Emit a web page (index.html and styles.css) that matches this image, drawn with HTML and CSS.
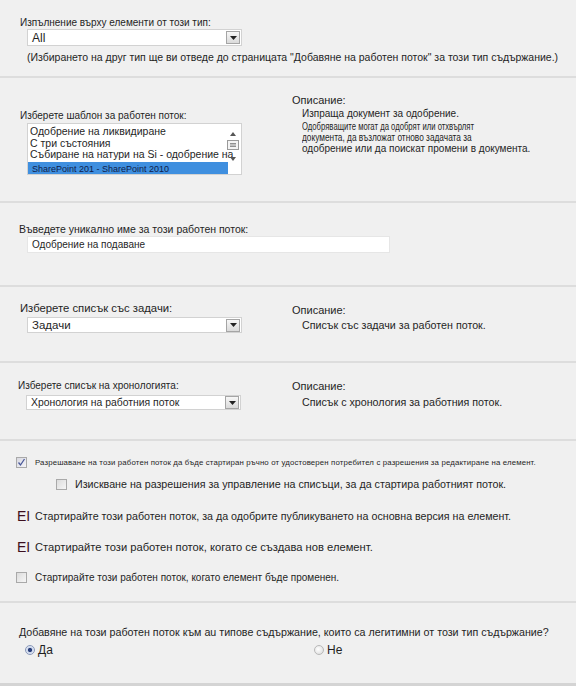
FILE: index.html
```html
<!DOCTYPE html>
<html lang="bg">
<head>
<meta charset="utf-8">
<title>Workflow settings</title>
<link rel="stylesheet" href="styles.css">
</head>
<body>
<div class="sec s1">
  <div class="lbl">Изпълнение върху елементи от този тип:</div>
  <div class="select sel-a"><span>All</span><span class="dd"><svg width="7" height="4" viewBox="0 0 7 4"><path d="M0 0h7L3.5 4z" fill="#222"/></svg></span></div>
  <div class="note">(Избирането на друг тип ще ви отведе до страницата "Добавяне на работен поток" за този тип съдържание.)</div>
</div>

<div class="sec s2 row">
  <div class="left">
    <div class="lbl">Изберете шаблон за работен поток:</div>
    <div class="listbox">
      <div class="opt">Одобрение на ликвидиране</div>
      <div class="opt">С три състояния</div>
      <div class="opt">Събиране на натури на Si - одобрение на</div>
      <div class="opt selected">SharePoint 201 - SharePoint 2010</div>
      <div class="scroll">
        <svg class="up" width="6" height="4" viewBox="0 0 6 4"><path d="M0 4L3 0L6 4z" fill="#555"/></svg>
        <svg class="thumb" width="12" height="10" viewBox="0 0 12 10"><rect x="0.5" y="0.5" width="11" height="9" fill="#f4f4f4" stroke="#9a9a9a"/><path d="M3 3.5h6M3 5h6M3 6.5h6" stroke="#777" stroke-width="0.8"/></svg>
        <svg class="down" width="6" height="4" viewBox="0 0 6 4"><path d="M0 0L3 4L6 0z" fill="#555"/></svg>
      </div>
    </div>
  </div>
  <div class="right r2">
    <div class="dlbl">Описание:</div>
    <div class="desc d-a">Изпраща документ за одобрение.</div>
    <div class="desc w-b"><span class="d-b">Одобряващите могат да одобрят или отхвърлят</span></div>
    <div class="desc w-c"><span class="d-c">документа, да възложат отново задачата за</span></div>
    <div class="desc d-d">одобрение или да поискат промени в документа.</div>
  </div>
</div>

<div class="sec s3">
  <div class="lbl lbl-name">Въведете уникално име за този работен поток:</div>
  <div class="input">Одобрение на подаване</div>
</div>

<div class="sec s4 row">
  <div class="left l4">
    <div class="lbl big">Изберете списък със задачи:</div>
    <div class="select sel-b"><span>Задачи</span><span class="dd"><svg width="7" height="4" viewBox="0 0 7 4"><path d="M0 0h7L3.5 4z" fill="#222"/></svg></span></div>
  </div>
  <div class="right r4">
    <div class="dlbl">Описание:</div>
    <div class="desc d-big">Списък със задачи за работен поток.</div>
  </div>
</div>

<div class="sec s5 row">
  <div class="left l5">
    <div class="lbl">Изберете списък на хронологията:</div>
    <div class="select sel-c"><span>Хронология на работния поток</span><span class="dd"><svg width="7" height="4" viewBox="0 0 7 4"><path d="M0 0h7L3.5 4z" fill="#222"/></svg></span></div>
  </div>
  <div class="right r5">
    <div class="dlbl">Описание:</div>
    <div class="desc d-big">Списък с хронология за работния поток.</div>
  </div>
</div>

<div class="sec s6">
  <div class="crow c1"><span class="cb checked"><svg width="9" height="9" viewBox="0 0 9 9"><path d="M1.5 4.5L3.5 7L7.5 1" fill="none" stroke="#4b5a9a" stroke-width="1.3"/></svg></span><span class="tiny">Разрешаване на този работен поток да бъде стартиран ръчно от удостоверен потребител с разрешения за редактиране на елемент.</span></div>
  <div class="crow c2"><span class="cb"></span><span class="mid">Изискване на разрешения за управление на списъци, за да стартира работният поток.</span></div>
  <div class="crow c3"><span class="ei">EI</span><span class="mid">Стартирайте този работен поток, за да одобрите публикуването на основна версия на елемент.</span></div>
  <div class="crow c4"><span class="ei">EI</span><span class="mid lg">Стартирайте този работен поток, когато се създава нов елемент.</span></div>
  <div class="crow c5"><span class="cb"></span><span class="sm">Стартирайте този работен поток, когато елемент бъде променен.</span></div>
</div>

<div class="sec s7">
  <div class="q">Добавяне на този работен поток към au типове съдържание, които са легитимни от този тип съдържание?</div>
  <div class="radios">
    <span class="ropt yes"><span class="radio on"></span>Да</span>
    <span class="ropt no"><span class="radio"></span>Не</span>
  </div>
</div>
</body>
</html>
```

FILE: styles.css
```css
html, body {
  margin: 0;
  padding: 0;
}
body {
  background: #f0f0f0;
  font-family: "Liberation Sans", Arial, sans-serif;
  color: #1f1f1f;
  width: 576px;
  height: 686px;
  overflow: hidden;
}
.sec {
  box-sizing: border-box;
  border-bottom: 2px solid #dddddd;
  padding-left: 20px;
}
.row {
  display: flex;
}
.left {
  width: 272px;
  flex: none;
}
.lbl {
  font-size: 10px;
  line-height: 12px;
  white-space: nowrap;
}
.lbl.big {
  font-size: 11.3px;
  line-height: 13px;
}
.select {
  margin-left: 7px;
  width: 215px;
  box-sizing: border-box;
  background: #fff;
  border: 1px solid #d2d2d2;
  display: flex;
  align-items: center;
  justify-content: space-between;
  padding-left: 4px;
  font-size: 11px;
  white-space: nowrap;
}
.dd {
  width: 14px;
  height: 13px;
  box-sizing: border-box;
  border: 1px solid #a5a5a5;
  background: linear-gradient(#f7f7f7, #dadada);
  margin-right: 1px;
  display: flex;
  align-items: center;
  justify-content: center;
}
.dd svg { display: block; }

/* section 1 */
.s1 {
  height: 78px;
  padding-top: 17px;
}
.sel-a {
  height: 17px;
  font-size: 12px;
}
.note {
  margin: 5px 0 0 7px;
  font-size: 10.5px;
  line-height: 12px;
  white-space: nowrap;
}

/* section 2 */
.s2 {
  height: 125px;
}
.s2 .left {
  padding-top: 32px;
}
.listbox {
  position: relative;
  margin: 1px 0 0 7px;
  width: 215px;
  height: 52px;
  box-sizing: border-box;
  background: #fff;
  border: 1px solid #d2d2d2;
  padding-top: 2px;
  overflow: hidden;
}
.opt {
  font-size: 10.5px;
  line-height: 11.5px;
  padding-left: 2px;
  white-space: nowrap;
}
.opt.selected {
  background: #3f8fdf;
  font-size: 9px;
  line-height: 14px;
  margin-top: 1px;
  width: 196px;
  padding-left: 4px;
  color: #10204a;
}
.scroll {
  position: absolute;
  right: 0;
  top: 0;
  bottom: 0;
  width: 16px;
  display: flex;
  flex-direction: column;
  align-items: center;
}
.scroll .up { margin-top: 8px; }
.scroll .thumb { margin-top: 4px; }
.scroll .down { margin-top: 7px; }

.right .dlbl {
  font-size: 11px;
  line-height: 12px;
}
.desc {
  margin-left: 10px;
  white-space: nowrap;
}
.r2 {
  padding-top: 16px;
}
.d-a { font-size: 10px; line-height: 12px; margin-top: 2px; }
.w-b {
  font-size: 10px;
  line-height: 12px;
  height: 12px;
  margin-top: 1px;
}
.d-b {
  display: inline-block;
  vertical-align: top;
  line-height: 12px;
  transform: scaleX(0.77);
  transform-origin: left center;
}
.w-c {
  font-size: 10px;
  line-height: 10px;
  height: 10px;
}
.d-c {
  display: inline-block;
  vertical-align: top;
  line-height: 10px;
  transform: scaleX(0.83);
  transform-origin: left center;
}
.d-d { font-size: 10px; line-height: 12px; }

/* section 3 */
.s3 {
  height: 84px;
  padding-top: 20px;
  padding-left: 19px;
}
.lbl-name {
  font-size: 10.5px;
}
.input {
  margin: 1px 0 0 8px;
  width: 363px;
  height: 17px;
  box-sizing: border-box;
  background: #fff;
  border: 1px solid #e6e6e6;
  padding-left: 4px;
  font-size: 10px;
  line-height: 15px;
}

/* section 4 */
.s4 {
  height: 76px;
}
.l4 {
  padding-top: 15px;
}
.sel-b {
  margin-top: 2px;
  height: 16px;
  font-size: 11.5px;
}
.r4 {
  padding-top: 17px;
}
.d-big {
  font-size: 10.7px;
  line-height: 12px;
  margin-top: 3px;
}

/* section 5 */
.s5 {
  height: 78px;
  padding-left: 18px;
}
.l5 {
  width: 274px;
  padding-top: 17px;
}
.sel-c {
  margin-left: 8px;
  margin-top: 3px;
  height: 15px;
  font-size: 10.4px;
}
.r5 {
  padding-top: 17px;
}
.r5 .d-big {
  margin-top: 4px;
}

/* section 6 */
.s6 {
  height: 162px;
  padding-left: 16px;
  padding-top: 15px;
}
.crow {
  display: flex;
  align-items: center;
  white-space: nowrap;
}
.cb {
  flex: none;
  width: 11px;
  height: 11px;
  box-sizing: border-box;
  border: 1px solid #a9a9a9;
  background: linear-gradient(135deg, #dcdcdc, #f6f6f6);
  margin-right: 8px;
  display: flex;
  align-items: center;
  justify-content: center;
}
.cb.checked {
  background: linear-gradient(135deg, #d8d8e0, #f4f4f8);
}
.cb svg { display: block; }
.tiny {
  font-size: 7.8px;
  letter-spacing: 0.15px;
}
.mid {
  font-size: 10.7px;
}
.mid.lg {
  font-size: 11.2px;
}
.sm {
  font-size: 10px;
}
.ei {
  flex: none;
  width: 18px;
  font-size: 14px;
  line-height: 14px;
  color: #3c0f1e;
  padding-left: 1px;
}
.c1 { height: 12px; }
.c2 { height: 12px; margin-top: 10px; padding-left: 40px; }
.c3 { height: 14px; margin-top: 19px; }
.c4 { height: 14px; margin-top: 17px; }
.c5 { height: 12px; margin-top: 17px; }

/* section 7 */
.s7 {
  height: 83px;
  padding-top: 23px;
  padding-left: 19px;
  border-bottom: 3px solid #d4d4d4;
}
.q {
  font-size: 10.7px;
  line-height: 13px;
  white-space: nowrap;
}
.radios {
  display: flex;
  margin-top: 4px;
  font-size: 12px;
  line-height: 14px;
}
.ropt {
  display: flex;
  align-items: center;
}
.ropt.yes {
  margin-left: 6px;
  width: 289px;
}
.radio {
  width: 10px;
  height: 10px;
  box-sizing: border-box;
  border-radius: 50%;
  border: 1px solid #b8b8b8;
  background: radial-gradient(circle at 40% 40%, #ffffff, #d8d8d8);
  margin-right: 3px;
  position: relative;
}
.radio.on {
  border-color: #8a98b8;
  background: radial-gradient(circle, #2a3f7a 0, #2a3f7a 1.8px, #c9d4ea 2.4px, #eef2fa 5px);
}
```
